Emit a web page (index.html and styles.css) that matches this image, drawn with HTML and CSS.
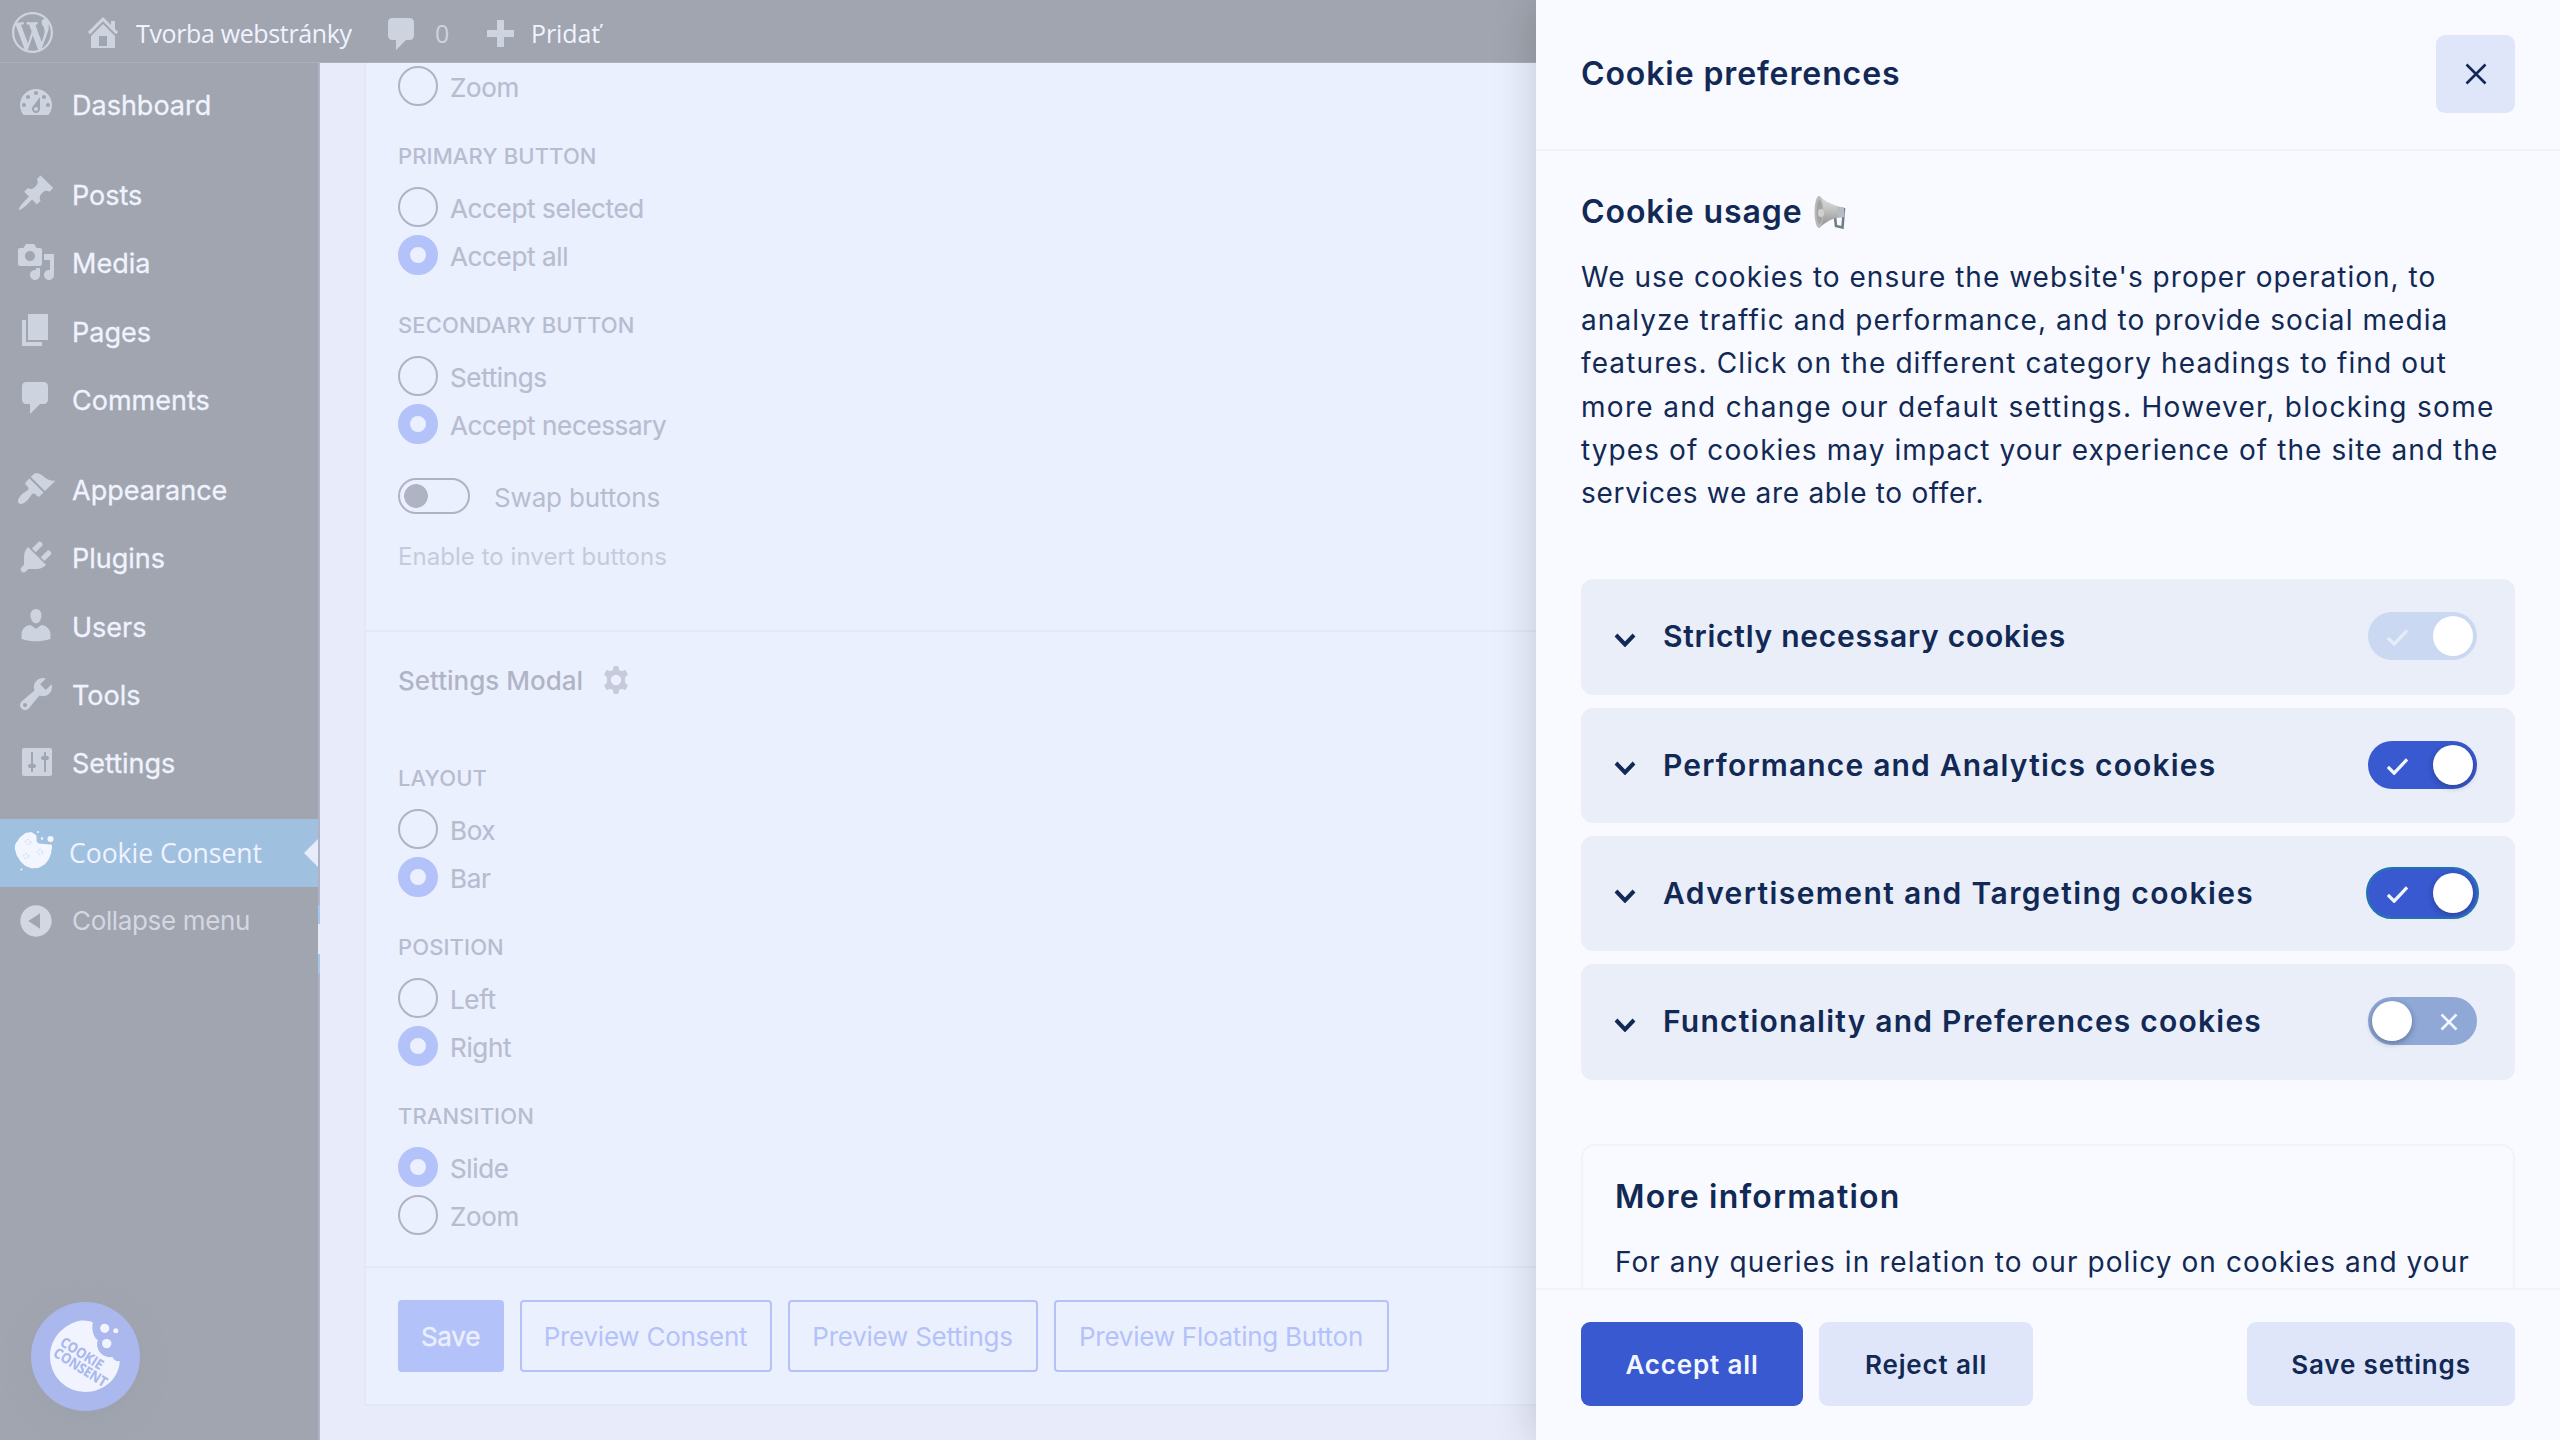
FILE: index.html
```html
<!DOCTYPE html>
<html lang="en">
<head>
<meta charset="utf-8">
<title>Cookie Consent</title>
<link rel="stylesheet" href="styles.css">
</head>
<body>
<div class="page">
  <header class="adminbar">
    <svg class="ic wp" viewBox="0 0 20 20"><path d="M20 10c0-5.51-4.49-10-10-10C4.48 0 0 4.49 0 10c0 5.52 4.48 10 10 10 5.51 0 10-4.48 10-10zM7.78 15.37L4.37 6.22c.55-.02 1.17-.08 1.17-.08.5-.06.44-1.13-.06-1.11 0 0-1.45.11-2.37.11-.18 0-.37 0-.58-.01C4.12 2.69 6.87 1.11 10 1.11c2.33 0 4.45.87 6.05 2.34-.68-.11-1.65.39-1.65 1.58 0 .74.45 1.36.9 2.1.35.61.55 1.36.55 2.46 0 1.49-1.4 5-1.4 5l-3.03-8.37c.54-.02.82-.17.82-.17.5-.05.44-1.25-.06-1.22 0 0-1.44.12-2.38.12-.87 0-2.33-.12-2.33-.12-.5-.03-.56 1.2-.06 1.22l.92.08 1.26 3.41zM17.41 10c.24-.64.74-1.87.43-4.25.7 1.29 1.05 2.71 1.05 4.25 0 3.29-1.73 6.24-4.4 7.78.97-2.59 1.94-5.2 2.92-7.78zM6.1 18.09C3.12 16.65 1.11 13.53 1.11 10c0-1.3.23-2.48.72-3.59C3.25 10.3 4.67 14.2 6.1 18.09zm4.03-6.63l2.58 6.98c-.86.29-1.76.45-2.71.45-.79 0-1.57-.11-2.29-.33.81-2.38 1.62-4.74 2.42-7.1z"/></svg>
    <svg class="ic home" viewBox="0 0 20 20"><path d="M16 8.5l1.53 1.53-1.06 1.06L10 4.6l-6.47 6.49-1.06-1.06L10 2.5l4 4v-2h2v4zm-6-2.46l6 5.99V18H4v-5.97zM12 17v-5H8v5h4z"/></svg>
    <span class="bar-text site">Tvorba webstránky</span>
    <svg class="ic bubble" viewBox="0 0 20 20"><path d="M5 2h9c1.1 0 2 .9 2 2v7c0 1.1-.9 2-2 2h-2l-5 5v-5H5c-1.1 0-2-.9-2-2V4c0-1.1.9-2 2-2z"/></svg>
    <span class="bar-text count">0</span>
    <svg class="ic plus" viewBox="0 0 27 27"><path d="M10 0h7v10h10v7H17v10h-7V17H0v-7h10z"/></svg>
    <span class="bar-text add">Pridať</span>
  </header>

  <div class="main">
    <nav class="sidebar">
      <a class="item"><svg class="ic" viewBox="0 0 20 20"><path d="M3.76 16h12.48c1.1-1.37 1.76-3.11 1.76-5 0-4.42-3.58-8-8-8s-8 3.58-8 8c0 1.89.66 3.63 1.76 5zM10 4c.55 0 1 .45 1 1s-.45 1-1 1-1-.45-1-1 .45-1 1-1zM6 6c.55 0 1 .45 1 1s-.45 1-1 1-1-.45-1-1 .45-1 1-1zm8 0c.55 0 1 .45 1 1s-.45 1-1 1-1-.45-1-1 .45-1 1-1zm-5.37 5.55L12 7v6c0 1.1-.9 2-2 2s-2-.9-2-2c0-.57.24-1.08.63-1.45zM4 10c.55 0 1 .45 1 1s-.45 1-1 1-1-.45-1-1 .45-1 1-1zm12 0c.55 0 1 .45 1 1s-.45 1-1 1-1-.45-1-1 .45-1 1-1zm-5 3c0-.55-.45-1-1-1s-1 .45-1 1 .45 1 1 1 1-.45 1-1z"/></svg><span>Dashboard</span></a>
      <a class="item sep"><svg class="ic" viewBox="0 0 20 20"><path d="M10.44 3.02l1.82-1.82 6.36 6.35-1.83 1.82c-1.05-.68-2.48-.57-3.41.36l-.75.75c-.92.93-1.04 2.35-.35 3.41l-1.83 1.82-2.41-2.41-2.8 2.79c-.42.42-3.38 2.71-3.8 2.29s1.86-3.39 2.28-3.81l2.79-2.79L4.1 9.36l1.83-1.82c1.05.69 2.48.57 3.4-.36l.75-.75c.93-.92 1.05-2.35.36-3.41z"/></svg><span>Posts</span></a>
      <a class="item"><svg class="ic" viewBox="0 0 20 20"><path d="M13 11V4c0-.55-.45-1-1-1h-1.67L9 1H5L3.67 3H2c-.55 0-1 .45-1 1v7c0 .55.45 1 1 1h10c.55 0 1-.45 1-1zM7 4.5c1.38 0 2.5 1.12 2.5 2.5S8.38 9.5 7 9.5 4.5 8.38 4.5 7 5.62 4.5 7 4.5zM14 6h5v10.5c0 1.38-1.12 2.5-2.5 2.5S14 17.88 14 16.5s1.12-2.5 2.5-2.5c.17 0 .34.02.5.05V9h-3V6zm-4 8.05V13h2v3.5c0 1.38-1.12 2.5-2.5 2.5S7 17.88 7 16.5 8.12 14 9.5 14c.17 0 .34.02.5.05z"/></svg><span>Media</span></a>
      <a class="item"><svg class="ic" viewBox="0 0 20 20"><path d="M6 15V2h10v13H6zm-1 1h8v2H3V5h2v11z"/></svg><span>Pages</span></a>
      <a class="item"><svg class="ic" viewBox="0 0 20 20"><path d="M5 2h9c1.1 0 2 .9 2 2v7c0 1.1-.9 2-2 2h-2l-5 5v-5H5c-1.1 0-2-.9-2-2V4c0-1.1.9-2 2-2z"/></svg><span>Comments</span></a>
      <a class="item sep"><svg class="ic" viewBox="0 0 20 20"><path d="M14.48 11.06L7.41 3.99l1.5-1.5c.5-.56 2.3-.47 3.51.32 1.21.8 1.43 1.28 2.91 2.1 1.18.64 2.45 1.26 4.45.85zm-.71.71L6.7 4.7 4.93 6.47c-.39.39-.39 1.02 0 1.41l1.06 1.06c.39.39.39 1.03 0 1.42-.6.6-1.43 1.11-2.21 1.69-.35.26-.7.53-1.01.84C1.43 14.23.4 16.08 1.4 17.07c.99 1 2.84-.03 4.18-1.36.31-.31.58-.66.85-1.02.57-.78 1.08-1.61 1.69-2.21.39-.39 1.02-.39 1.41 0l1.06 1.06c.39.39 1.02.39 1.41 0z"/></svg><span>Appearance</span></a>
      <a class="item"><svg class="ic" viewBox="0 0 20 20"><path d="M13.11 4.36L9.87 7.6 8 5.73l3.24-3.24c.35-.34 1.05-.2 1.56.32.52.51.66 1.21.31 1.55zm-8 1.77l.91-1.12 9.01 9.01-1.19.84c-.71.71-2.63 1.16-3.82 1.16H6.14L4.9 17.26c-.59.59-1.54.59-2.12 0-.59-.58-.59-1.53 0-2.12l1.24-1.24v-3.88c0-1.13.4-3.19 1.09-3.89zm7.26 3.97l3.24-3.24c.34-.35 1.04-.21 1.55.31.52.51.66 1.21.31 1.55l-3.24 3.25z"/></svg><span>Plugins</span></a>
      <a class="item"><svg class="ic" viewBox="0 0 20 20"><path d="M10 9.25c-2.27 0-2.73-3.44-2.73-3.44C7 4.02 7.82 2 9.97 2c2.16 0 2.98 2.02 2.71 3.81 0 0-.41 3.44-2.68 3.44zm0 2.57L12.72 10c2.39 0 4.52 2.33 4.52 4.53v2.49s-3.65 1.13-7.24 1.13c-3.65 0-7.24-1.13-7.24-1.13v-2.49c0-2.25 1.94-4.48 4.47-4.48z"/></svg><span>Users</span></a>
      <a class="item"><svg class="ic" viewBox="0 0 20 20"><path d="M16.68 9.77c-1.34 1.34-3.3 1.67-4.95.99l-5.41 6.52c-.99.99-2.59.99-3.58 0s-.99-2.59 0-3.57l6.52-5.42c-.68-1.65-.35-3.61.99-4.95 1.28-1.28 3.12-1.62 4.72-1.06l-2.89 2.89 2.82 2.82 2.86-2.87c.53 1.58.18 3.39-1.08 4.65zM3.81 16.21c.4.39 1.04.39 1.43 0 .4-.4.4-1.04 0-1.43-.39-.4-1.03-.4-1.43 0-.39.39-.39 1.03 0 1.43z"/></svg><span>Tools</span></a>
      <a class="item"><svg class="ic" viewBox="0 0 20 20"><path d="M18 16V4c0-.55-.45-1-1-1H4c-.55 0-1 .45-1 1v12c0 .55.45 1 1 1h13c.55 0 1-.45 1-1zM8 11h1c.55 0 1 .45 1 1s-.45 1-1 1H8.500v1.500c0 .28-.22.5-.5.5s-.5-.22-.5-.5V13H7c-.55 0-1-.45-1-1s.45-1 1-1h.5V5.500c0-.28.22-.5.5-.5s.5.22.5.5V11zm6-2h-.5c-.55 0-1-.45-1-1s.45-1 1-1h.5V5.500c0-.28.22-.5.5-.5s.5.22.5.5V7h.5c.55 0 1 .45 1 1s-.45 1-1 1H15v5.500c0 .28-.22.5-.5.5s-.5-.22-.5-.5V9z"/></svg><span>Settings</span></a>
      <a class="item sep current">
        <svg class="cookie" viewBox="0 0 40 40">
          <path d="M15 1.500c2-.6 4 0 5 1.500 2 .3 2.600 1.600 2.500 3.500.2 2.500-.3 4 1 5 1.500 1.700 4 1 6.500 1.500 2.500-.2 4.500 1 7.500.5 1 2.500.5 4-.2 6 0 2-.3 3.500-1 5-.8 2.500-1.800 4.500-3.500 6.500-1.300 2-2.800 3-5 4-2 1.600-4.500 2.500-7 2-2.500.7-4.500 0-6.500-1-2.500-.6-4-1.800-5.500-3.500-2-1.300-3-2.700-4-5-1.700-2.300-2.800-4-3-6.500C.9 18.500.5 17 1 15c.3-2.500 1.500-4 3-5.500C5 7 6.500 5.500 9 4c1.700-1.800 3.500-2.600 6-2.500z"/>
          <circle cx="36.500" cy="8" r="3"/><circle cx="28" cy="7.500" r="1.200"/><circle cx="24" cy="1" r="1"/><circle cx="7.500" cy="38.500" r="1"/>
          <g class="chips"><circle cx="14" cy="11" r="2.500"/><circle cx="26" cy="21" r="2.500"/><circle cx="12" cy="25" r="2.500"/></g>
        </svg>
        <span>Cookie Consent</span>
        <svg class="arrow" viewBox="0 0 14 28"><path d="M14 0v28L0 14z"/></svg>
      </a>
      <a class="item collapse"><svg class="ic" viewBox="0 0 20 20"><path d="M10 2.160c4.330 0 7.840 3.510 7.840 7.840s-3.510 7.840-7.840 7.840S2.160 14.330 2.160 10 5.670 2.160 10 2.160zm2 11.720V6.120L6.180 9.970z"/></svg><span>Collapse menu</span></a>
    </nav>
    <div class="strip"><i class="gap"></i><i class="mark"></i><i class="pale"></i><i class="mark"></i></div>

    <main class="content">
      <section class="card">
        <div class="block first">
          <label class="radio"><i></i><span>Zoom</span></label>
          <h4>PRIMARY BUTTON</h4>
          <label class="radio"><i></i><span>Accept selected</span></label>
          <label class="radio on"><i></i><span>Accept all</span></label>
          <h4>SECONDARY BUTTON</h4>
          <label class="radio"><i></i><span>Settings</span></label>
          <label class="radio on"><i></i><span>Accept necessary</span></label>
          <div class="swap"><i></i><span>Swap buttons</span></div>
          <p class="help">Enable to invert buttons</p>
        </div>
        <div class="block second">
          <h3>Settings Modal
            <svg class="gear" viewBox="0 0 26 28"><path fill-rule="evenodd" d="M10.800 0h4.400l1 4 2.300 1.300 3.900-1.300 2.500 4.500-2.800 2.800v5.400l2.800 2.800-2.500 4.500-3.900-1.300-2.300 1.300-1 4h-4.400l-1-4-2.300-1.300L3.600 24 1.100 19.500l2.800-2.800v-5.400L1.100 8.500 3.600 4l3.900 1.300L9.800 4zM13 8.800a5.200 5.200 0 1 0 0 10.400 5.200 5.200 0 1 0 0-10.400z"/></svg>
          </h3>
          <h4>LAYOUT</h4>
          <label class="radio"><i></i><span>Box</span></label>
          <label class="radio on"><i></i><span>Bar</span></label>
          <h4>POSITION</h4>
          <label class="radio"><i></i><span>Left</span></label>
          <label class="radio on"><i></i><span>Right</span></label>
          <h4>TRANSITION</h4>
          <label class="radio on"><i></i><span>Slide</span></label>
          <label class="radio"><i></i><span>Zoom</span></label>
        </div>
        <div class="actions">
          <button class="btn solid">Save</button>
          <button class="btn b1">Preview Consent</button>
          <button class="btn b2">Preview Settings</button>
          <button class="btn b3">Preview Floating Button</button>
        </div>
      </section>
    </main>
  </div>

  <svg class="fab" viewBox="0 0 109 109">
    <circle class="disc" cx="54.500" cy="54.500" r="54.500"/>
    <path class="biscuit" d="M61.800 20.200C57 18.600 50 17.500 43 20.500 29 26 19 39 19 54.500A35 35 0 0 0 54 90c19 0 34-13.500 34.800-31-3.300.8-6-.8-7.300-4-6.500 1-13.500-3-15-9.500-.5-2.500-.5-5 .3-7.500-4-2.500-6.500-9.500-5-17.800z"/>
    <circle class="biscuit" cx="73.700" cy="26.300" r="4.600"/><circle class="biscuit" cx="84.800" cy="28.800" r="2.500"/><circle class="biscuit" cx="75.700" cy="41.600" r="4.700"/>
    <text class="fab-text" transform="translate(48.500 55.500) rotate(32)" text-anchor="middle" textLength="48" lengthAdjust="spacingAndGlyphs">COOKIE</text>
    <text class="fab-text" transform="translate(47 69.500) rotate(32)" text-anchor="middle" textLength="60" lengthAdjust="spacingAndGlyphs">CONSENT</text>
  </svg>

  <aside class="drawer">
    <header class="drawer-head">
      <h2 class="t-pref">Cookie preferences</h2>
      <button class="close"><svg viewBox="0 0 22 22"><path d="M1.500 1.500l19 19M20.500 1.500l-19 19"/></svg></button>
    </header>
    <div class="drawer-body">
      <h2 class="usage">Cookie usage
        <svg class="horn" viewBox="0 0 32 34">
          <defs><linearGradient id="cone" x1="0" y1="0" x2="0" y2="1"><stop offset="0" stop-color="#dcdcdc"/><stop offset=".35" stop-color="#c9c9c9"/><stop offset="1" stop-color="#8d8d8d"/></linearGradient></defs>
          <path d="M21 22l1 9 6.500 1.500L30 13" fill="none" stroke="#6f7f88" stroke-width="2.600"/>
          <path d="M5 1c6 5 14 10 25 11.500L30 22c-11 0-18 5-25 11z" fill="url(#cone)"/>
          <path d="M23 12l7 .5.500 9.500-6 .5z" fill="#b4bdc2"/>
          <ellipse cx="5" cy="17" rx="4.500" ry="16" fill="#b9b9b9"/>
          <ellipse cx="5.500" cy="17" rx="3" ry="12" fill="#a3a3a3"/>
          <ellipse cx="7" cy="18" rx="3" ry="4" fill="#d0d0d0"/>
        </svg>
      </h2>
      <p class="copy"><span class="l1">We use cookies to ensure the website's proper operation, to</span><br><span class="l2">analyze traffic and performance, and to provide social media</span><br><span class="l3">features. Click on the different category headings to find out</span><br><span class="l4">more and change our default settings. However, blocking some</span><br><span class="l5">types of cookies may impact your experience of the site and the</span><br><span class="l6">services we are able to offer.</span></p>
      <div class="rows">
        <div class="row"><svg class="chev" viewBox="0 0 22 14"><path d="M2 2l9 9.500L20 2"/></svg><span class="r1">Strictly necessary cookies</span><div class="toggle on locked"><svg viewBox="0 0 24 18"><path d="M2 10l6.500 6.500L22 2"/></svg><i></i></div></div>
        <div class="row"><svg class="chev" viewBox="0 0 22 14"><path d="M2 2l9 9.500L20 2"/></svg><span class="r2">Performance and Analytics cookies</span><div class="toggle on"><svg viewBox="0 0 24 18"><path d="M2 10l6.500 6.500L22 2"/></svg><i></i></div></div>
        <div class="row"><svg class="chev" viewBox="0 0 22 14"><path d="M2 2l9 9.500L20 2"/></svg><span class="r3">Advertisement and Targeting cookies</span><div class="toggle on focus"><svg viewBox="0 0 24 18"><path d="M2 10l6.500 6.500L22 2"/></svg><i></i></div></div>
        <div class="row"><svg class="chev" viewBox="0 0 22 14"><path d="M2 2l9 9.500L20 2"/></svg><span class="r4">Functionality and Preferences cookies</span><div class="toggle off"><i></i><svg class="x" viewBox="0 0 18 18"><path d="M1.500 1.500l15 15M16.500 1.500l-15 15"/></svg></div></div>
      </div>
      <div class="info">
        <h2 class="t-more">More information</h2>
        <p class="copy l7">For any queries in relation to our policy on cookies and your</p>
      </div>
    </div>
    <footer class="drawer-foot">
      <button class="cta primary">Accept all</button>
      <button class="cta reject">Reject all</button>
      <button class="cta save">Save settings</button>
    </footer>
  </aside>
</div>
</body>
</html>
```
FILE: styles.css
```css
* { box-sizing: border-box; margin: 0; padding: 0; }
body { font-family: Inter, "Noto Sans", sans-serif; }
button { font: inherit; border: 0; }
i { display: block; flex: none; }

.page { position: relative; width: 2560px; height: 1440px; overflow: hidden; display: flex; flex-direction: column; background: #e8ebfa; }

/* Admin bar */
.adminbar { height: 63px; flex: none; display: flex; align-items: center; background: #a1a5af; border-bottom: 1px solid #abafbe; padding-left: 12px; }
.ic { width: 40px; height: 40px; flex: none; fill: #cdd3df; }
.adminbar .wp { width: 41px; height: 41px; margin-top: 3px; }
.adminbar .home { margin-left: 30px; margin-top: 2px; }
.adminbar .bubble { margin-left: 30px; margin-top: 5px; }
.adminbar .plus { width: 27px; height: 27px; margin-top: 5px; }
.bar-text { font-family: "Open Sans", sans-serif; font-size: 25px; line-height: 40px; color: #f0f3ff; white-space: nowrap; padding-top: 3px; }
.site { margin-left: 13px; width: 216px; letter-spacing: -0.36px; }
.count { margin-left: 13px; width: 52px; color: #cdd3df; }
.add { margin-left: 17px; letter-spacing: -0.1px; }

.main { flex: 1; display: flex; min-height: 0; }

/* Side menu */
.sidebar { width: 318px; flex: none; background: #a1a5af; padding-top: 8px; }
.item { display: flex; align-items: center; gap: 16px; height: 68.3px; padding-left: 16px; font-size: 27px; letter-spacing: 0; color: #f0f3ff; -webkit-text-stroke: 0.3px #f0f3ff; }
.item .ic { margin-bottom: 4px; }
.item.sep { margin-top: 22px; }
.item.current { background: #a0c0e0; margin-top: 21px; padding-left: 14px; gap: 15px; font-family: "Open Sans", sans-serif; font-size: 26.500px; -webkit-text-stroke: 0; }
.cookie { width: 40px; height: 40px; fill: #f3f6ff; margin-bottom: 4px; }
.chips { fill: none; stroke: #d6e3f4; stroke-width: 1.600px; stroke-dasharray: 2 1.500; }
.arrow { width: 14px; height: 28px; margin-left: auto; fill: #e8ebfa; }
.item.collapse { height: 66.500px; font-size: 26px; letter-spacing: -0.35px; color: #d3d7e2; -webkit-text-stroke: 0; }
.item.collapse .ic { fill: #d3d7e2; margin-bottom: 0; }

.strip { width: 2px; flex: none; background: #b0b3c5; }
.gap { height: 842px; }
.mark { height: 19px; background: #a6c6ec; }
.pale { height: 30px; background: #e8ebfa; }

/* Settings card */
.content { flex: 1; padding-left: 45px; }
.card { background: #ebf0ff; border: solid #e4e7f6; border-width: 0 0 2px 2px; margin-left: -1px; }
.block { padding-left: 32px; border-bottom: 2px solid #e4e7f6; display: flex; flex-direction: column; }
.first { padding-top: 3px; padding-bottom: 58px; }
.second { padding-top: 32px; padding-bottom: 31px; }
h3 { display: flex; align-items: center; gap: 20px; height: 32px; margin-bottom: 32px; font-size: 26px; font-weight: 500; color: #b0b4c5; }
.gear { width: 26px; height: 28px; fill: #c6cadb; }
h4 { font-size: 22px; line-height: 30px; font-weight: 500; color: #b7bccf; margin: 35px 0 16px; letter-spacing: 0.100px; }
.radio { display: flex; align-items: center; gap: 12px; height: 40px; font-size: 26px; letter-spacing: -0.35px; color: #b7bccf; -webkit-text-stroke: 0.2px #b7bccf; }
.radio span, .swap span { padding-top: 2px; }
.radio + .radio { margin-top: 8px; }
.radio i { width: 40px; height: 40px; border-radius: 50%; border: 2px solid #b0b3c3; }
.radio.on i { border: 12px solid #b4c2fa; }
.swap { display: flex; align-items: center; gap: 24px; margin-top: 34px; height: 36px; font-size: 26px; letter-spacing: -0.15px; color: #b7bccf; }
.swap i { width: 72px; height: 36px; border: 2px solid #b0b3c3; border-radius: 18px; background: radial-gradient(circle 12px at 16px 16px, #b0b3c3 11.500px, transparent 12.200px); }
.help { margin-top: 28px; font-size: 24px; line-height: 30px; letter-spacing: 0.050px; color: #c6cbdc; }
.actions { display: flex; gap: 16px; padding: 32px 0 32px 32px; }
.btn { height: 72px; border: 2px solid #b4c2fa; border-radius: 4px; background: none; color: #b4c2fa; font-size: 26px; letter-spacing: -0.25px; padding: 1px 1px 0 0; }
.btn.solid { background: #b4c2fa; color: #ebf0ff; width: 106px; -webkit-text-stroke: 0.4px #ebf0ff; }
.b1 { width: 252px; }
.b2 { width: 250px; }
.b3 { width: 335px; }

/* Floating button */
.fab { position: absolute; left: 31px; top: 1302px; width: 109px; height: 109px; border-radius: 50%; overflow: visible; filter: drop-shadow(0 8px 12px rgba(150, 160, 170, 0.500)); }
.disc { fill: #aab8ed; }
.biscuit { fill: #f1f4ff; }
.fab-text { font: 700 14px "Open Sans", sans-serif; fill: #aab8ed; stroke: #aab8ed; stroke-width: 0.300px; }

/* Preferences drawer */
.drawer { position: absolute; top: 0; right: 0; width: 1024px; height: 1440px; background: #f9faff; color: #112954; display: flex; flex-direction: column; box-shadow: 0 0 40px rgba(2, 2, 3, 0.180); }
h2 { font-size: 32px; line-height: 40px; font-weight: 600; white-space: nowrap; }
.t-pref { letter-spacing: 0.900px; }
.drawer-head { height: 151px; flex: none; display: flex; align-items: center; justify-content: space-between; padding: 0 45px 1px; border-bottom: 2px solid #f1f3f6; }
.close { width: 79px; height: 78px; border-radius: 9px; background: #e0e6f9; display: grid; place-items: center; }
.close svg { width: 22px; height: 22px; fill: none; stroke: #112954; stroke-width: 2.600px; }
.drawer-body { flex: 1; min-height: 0; overflow: hidden; padding: 41px 45px 0; }
.usage { display: flex; align-items: center; gap: 11px; letter-spacing: 0.920px; }
.horn { width: 32px; height: 34px; }
.copy { font-size: 28px; line-height: 43.200px; white-space: nowrap; }
.usage + .copy { margin-top: 24px; }
.l1 { letter-spacing: 1.020px; }
.l2 { letter-spacing: 1.070px; }
.l3 { letter-spacing: 1.100px; }
.l4 { letter-spacing: 1.310px; }
.l5 { letter-spacing: 1.080px; }
.l6 { letter-spacing: 0.700px; }
.l7 { letter-spacing: 1.060px; }
.rows { display: flex; flex-direction: column; gap: 12.800px; margin-top: 64px; }
.row { height: 115.500px; border-radius: 12px; background: #eaeef9; display: flex; align-items: center; padding: 0 38px 1.500px 33px; font-size: 30px; font-weight: 600; white-space: nowrap; }
.chev { width: 22px; height: 14px; margin: 7px 27px 0 0; fill: none; stroke: #112954; stroke-width: 4px; }
.r1 { letter-spacing: 0.740px; }
.r2 { letter-spacing: 1.170px; }
.r3 { letter-spacing: 1.400px; }
.r4 { letter-spacing: 1.220px; }
.toggle { margin-left: auto; width: 109px; height: 48px; border-radius: 24px; background: #3859d0; display: flex; align-items: center; justify-content: space-between; padding: 0 4px 0 18px; }
.toggle svg { width: 23px; height: 18px; margin-top: 2px; fill: none; stroke: #f3f6ff; stroke-width: 3.400px; }
.toggle i { width: 40px; height: 40px; border-radius: 50%; background: #fff; box-shadow: 0 2px 6px rgba(24, 32, 60, 0.400); }
.toggle.locked { background: #cbd8f1; }
.toggle.locked svg { stroke: #e6edf9; }
.toggle.locked i { box-shadow: none; }
.toggle.focus { outline: 2px solid #2271b1; box-shadow: 0 0 0 1px #4a8ac4; }
.toggle.off { background: #8fa8d6; padding: 0 19px 0 4px; }
.toggle .x { width: 18px; height: 18px; stroke-width: 2.600px; }
.info { margin-top: 64px; border: 2px solid #f1f3f6; border-radius: 14px; padding: 31px 32px; height: 300px; }
.t-more { letter-spacing: 1.220px; margin-bottom: 24px; }
.drawer-foot { height: 152px; flex: none; display: flex; gap: 16px; padding: 32px 45px; border-top: 2px solid #f1f3f6; }
.cta { height: 84px; border-radius: 9px; background: #e0e6f9; color: #112954; font-size: 26px; font-weight: 600; letter-spacing: 0.850px; }
.primary { width: 222px; background: #3859d0; color: #f3f6ff; }
.reject { width: 214px; }
.save { width: 268px; margin-left: auto; }
```
